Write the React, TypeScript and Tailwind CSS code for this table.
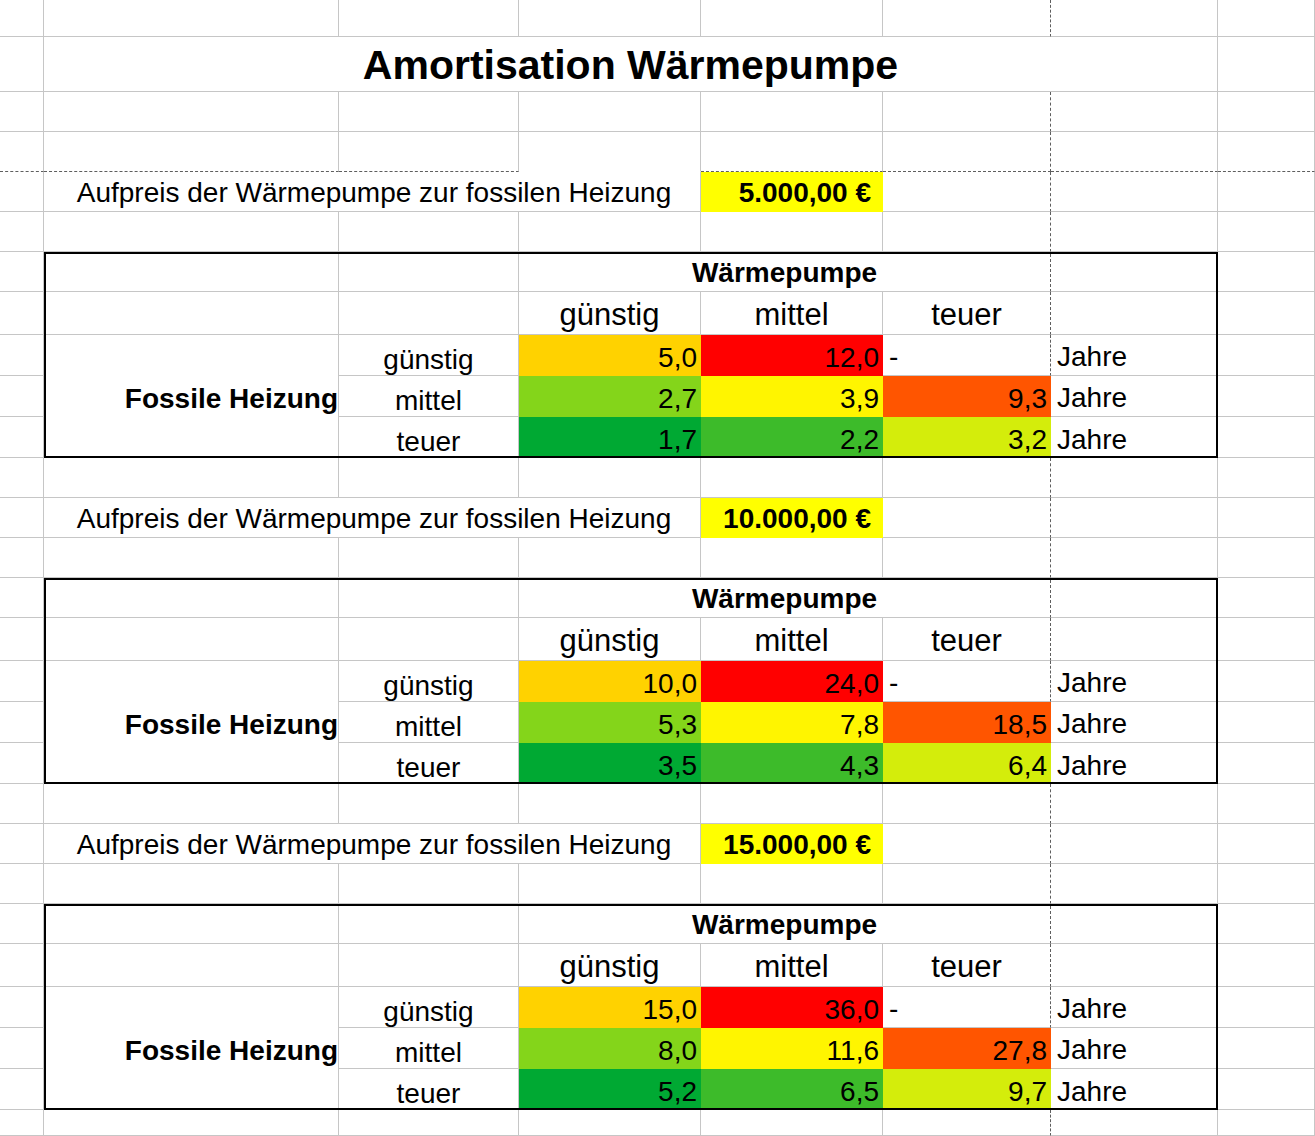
import React from 'react';

const DASH_R = 'border-r-[#5e5e5e] [border-right-style:dashed]';
const DASH_B = 'border-b-[#5e5e5e] [border-bottom-style:dashed]';

function Cell({ className = '', children }: { className?: string; children?: React.ReactNode }) {
  return (
    <div className={`shrink-0 border-r border-b border-[#c6c6c6] whitespace-nowrap ${className}`}>{children}</div>
  );
}

function EmptyRow({ h, dashedBottom = false }: { h: string; dashedBottom?: boolean }) {
  const b = dashedBottom ? DASH_B : '';
  return (
    <div className={`flex ${h}`}>
      <Cell className={`w-[44px] ${b}`} />
      <Cell className={`w-[295px] ${b}`} />
      <Cell className={`w-[180px] ${b}`} />
      <Cell className={`w-[182px] ${dashedBottom ? 'border-b-transparent' : ''}`} />
      <Cell className={`w-[182px] ${b}`} />
      <Cell className={`w-[168px] ${DASH_R} ${b}`} />
      <Cell className={`w-[167px] ${b}`} />
      <Cell className={`w-[97px] ${b}`} />
    </div>
  );
}

function PriceRow({ price }: { price: string }) {
  return (
    <div className="flex h-[40px]">
      <Cell className="w-[44px]" />
      <Cell className="w-[657px] flex items-end justify-center pl-[4px] pb-[4px] text-[28px] leading-none">
        Aufpreis der Wärmepumpe zur fossilen Heizung
      </Cell>
      <div className="w-[182px] shrink-0 bg-[#ffff00] flex items-end justify-end pr-[12px] pb-[5px] text-[28px] leading-none font-bold whitespace-nowrap">
        {price}
      </div>
      <Cell className={`w-[168px] ${DASH_R}`} />
      <Cell className="w-[167px]" />
      <Cell className="w-[97px]" />
    </div>
  );
}

function SideColumn({ w }: { w: string }) {
  return (
    <div className={`flex flex-col shrink-0 ${w}`}>
      <Cell className="h-[40px]" />
      <Cell className="h-[43px]" />
      <Cell className="h-[41px]" />
      <Cell className="h-[41px]" />
      <Cell className="h-[41px]" />
    </div>
  );
}

const NUM = 'flex items-end justify-end pr-[4px] text-[28px] leading-none whitespace-nowrap';

function Block({ v }: { v: string[][] }) {
  const labels = ['günstig', 'mittel', 'teuer'];
  return (
    <div className="flex h-[206px]">
      <SideColumn w="w-[44px]" />
      <div className="w-[1174px] shrink-0 border-2 border-black grid grid-cols-[293px_180px_182px_182px_168px_165px] grid-rows-[38px_43px_41px_41px_39px]">
        {/* row 1 */}
        <Cell />
        <Cell />
        <Cell className={`col-span-3 ${DASH_R} flex items-end justify-center pb-[4px] font-bold text-[28px] leading-none`}>
          Wärmepumpe
        </Cell>
        <div className="border-b border-[#c6c6c6]" />
        {/* row 2 */}
        <Cell />
        <Cell />
        <Cell className="flex items-end justify-center pb-[4px] text-[31px] leading-none">günstig</Cell>
        <Cell className="flex items-end justify-center pb-[4px] text-[31px] leading-none">mittel</Cell>
        <Cell className={`${DASH_R} flex items-end justify-center pb-[4px] text-[31px] leading-none`}>teuer</Cell>
        <div className="border-b border-[#c6c6c6]" />
        {/* row 3 */}
        <div className="row-span-3 border-r border-[#c6c6c6] flex items-center justify-end pt-[7px] font-bold text-[28px] leading-none whitespace-nowrap">
          Fossile Heizung
        </div>
        <Cell className="flex items-end justify-center pb-[1px] text-[28px] leading-none">{labels[0]}</Cell>
        <div className={`bg-[#ffd200] ${NUM} pb-[4px]`}>{v[0][0]}</div>
        <div className={`bg-[#ff0000] ${NUM} pb-[4px]`}>{v[0][1]}</div>
        <Cell className={`${DASH_R} flex items-end pl-[6px] pb-[4px] text-[28px] leading-none`}>-</Cell>
        <div className="border-b border-[#c6c6c6] flex items-end pl-[6px] pb-[4px] text-[28px] leading-none">Jahre</div>
        {/* row 4 */}
        <Cell className="flex items-end justify-center pb-[1px] text-[28px] leading-none">{labels[1]}</Cell>
        <div className={`bg-[#84d51a] ${NUM} pb-[4px]`}>{v[1][0]}</div>
        <div className={`bg-[#fff500] ${NUM} pb-[4px]`}>{v[1][1]}</div>
        <div className={`bg-[#ff5500] ${NUM} pb-[4px]`}>{v[1][2]}</div>
        <div className="border-b border-[#c6c6c6] flex items-end pl-[6px] pb-[4px] text-[28px] leading-none">Jahre</div>
        {/* row 5 */}
        <div className="border-r border-[#c6c6c6] flex items-end justify-center pb-0 text-[28px] leading-none">{labels[2]}</div>
        <div className={`bg-[#00a933] ${NUM} pb-[2px]`}>{v[2][0]}</div>
        <div className={`bg-[#3dbb2a] ${NUM} pb-[2px]`}>{v[2][1]}</div>
        <div className={`bg-[#d4ed0b] ${NUM} pb-[2px]`}>{v[2][2]}</div>
        <div className="flex items-end pl-[6px] pb-[2px] text-[28px] leading-none">Jahre</div>
      </div>
      <SideColumn w="w-[97px]" />
    </div>
  );
}

export default function App() {
  return (
    <div className="w-[1315px] h-[1136px] overflow-hidden bg-white text-black font-['Liberation_Sans',Arial,sans-serif]">
      <EmptyRow h="h-[37px]" />
      <div className="flex h-[55px]">
        <Cell className="w-[44px]" />
        <Cell className="w-[1174px] flex items-end justify-center pb-[5px] text-[41px] font-bold leading-none">
          Amortisation Wärmepumpe
        </Cell>
        <Cell className="w-[97px]" />
      </div>
      <EmptyRow h="h-[40px]" />
      <EmptyRow h="h-[40px]" dashedBottom />
      <PriceRow price="5.000,00 €" />
      <EmptyRow h="h-[40px]" />
      <Block v={[['5,0', '12,0'], ['2,7', '3,9', '9,3'], ['1,7', '2,2', '3,2']]} />
      <EmptyRow h="h-[40px]" />
      <PriceRow price="10.000,00 €" />
      <EmptyRow h="h-[40px]" />
      <Block v={[['10,0', '24,0'], ['5,3', '7,8', '18,5'], ['3,5', '4,3', '6,4']]} />
      <EmptyRow h="h-[40px]" />
      <PriceRow price="15.000,00 €" />
      <EmptyRow h="h-[40px]" />
      <Block v={[['15,0', '36,0'], ['8,0', '11,6', '27,8'], ['5,2', '6,5', '9,7']]} />
      <EmptyRow h="h-[26px]" />
    </div>
  );
}
